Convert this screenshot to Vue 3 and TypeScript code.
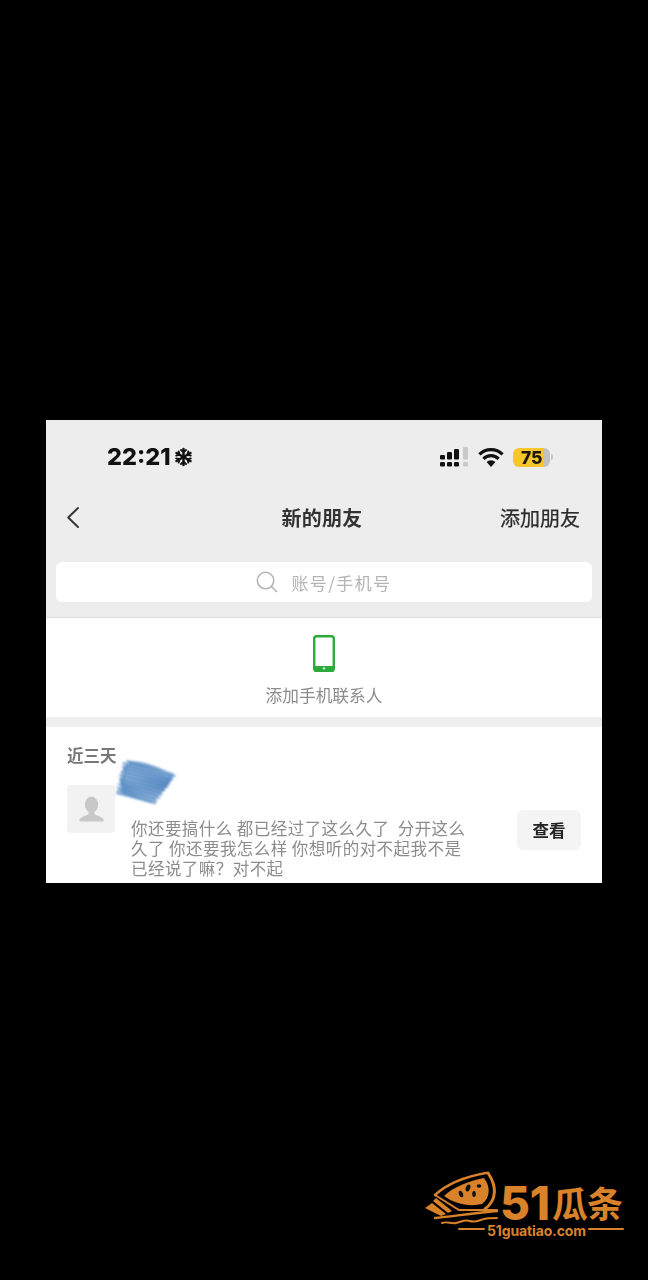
<script setup lang="ts">
// message text, one entry per line as in the screenshot
const msgLines: string[] = [
  '你还要搞什么 都已经过了这么久了  分开这么',
  '久了 你还要我怎么样 你想听的对不起我不是',
  '已经说了嘛？对不起',
]

// signal bars, each one split in an upper and a lower block
const signal = [
  { x: 0, y: 8, h: 4.6, gray: false },
  { x: 7, y: 5, h: 7.6, gray: false },
  { x: 14, y: 2, h: 10.6, gray: false },
  { x: 23, y: 0, h: 12.6, gray: true },
  { x: 0, y: 15, h: 4.6, gray: false },
  { x: 7, y: 15, h: 4.6, gray: false },
  { x: 14, y: 15, h: 4.6, gray: false },
  { x: 23, y: 15, h: 4.6, gray: true },
]

const flakeArms = [0, 60, 120, 180, 240, 300]

// pen scribble over the name: slanted strokes on a blue patch
const scribble = Array.from({ length: 30 }, (_, i) => {
  const t = i / 29
  const wob = Math.sin(i * 2.3) * 3
  const x1 = 12 - 8 * t + wob
  const y1 = 2 + 32 * t
  const x2 = 58 - 20 * t - wob
  const y2 = 15 + 29 * t
  return {
    d: `M${x1.toFixed(1)} ${y1.toFixed(1)}L${x2.toFixed(1)} ${y2.toFixed(1)}`,
    color: i % 3 === 0 ? '#8fb4da' : i % 3 === 1 ? '#4f84bf' : '#6a9ace',
  }
})
</script>

<template>
  <div class="page">
    <div class="shot">
      <div class="head-area">
        <div class="status">
          <div class="time-wrap">
            <span class="time">22:21</span>
            <svg width="19" height="20" viewBox="0 0 20 20" fill="none" stroke="#111" stroke-linecap="round" stroke-linejoin="round">
              <g v-for="a in flakeArms" :key="a" :transform="`rotate(${a} 10 10)`">
                <path d="M10 10V1.5" stroke-width="2.6" />
                <path d="M7.4 2.6 10 5.2l2.6-2.6" stroke-width="2" />
              </g>
            </svg>
          </div>
          <div class="sys">
            <svg width="29" height="20" viewBox="0 0 29 20">
              <rect v-for="(s, i) in signal" :key="i" :x="s.x" :y="s.y" width="5" :height="s.h" rx="1.3" :fill="s.gray ? '#c8c8c8' : '#111'" />
            </svg>
            <svg class="wifi" width="26" height="19" viewBox="0 0 26 19">
              <path d="M13 19 8.6 14a6.2 6.2 0 0 1 8.8 0Z" fill="#111" />
              <path d="M5.4 10.8a10.8 10.8 0 0 1 15.2 0" fill="none" stroke="#111" stroke-width="3.2" />
              <path d="M1.4 6.4a16.6 16.6 0 0 1 23.2 0" fill="none" stroke="#111" stroke-width="3.2" />
            </svg>
            <div class="battery">
              <div class="batt-body"><span class="batt-num">75</span></div>
              <div class="batt-tip"></div>
            </div>
          </div>
        </div>
        <div class="nav">
          <svg class="back" width="12" height="21" viewBox="0 0 12 21" fill="none" stroke="#333" stroke-width="1.9" stroke-linecap="round" stroke-linejoin="round">
            <path d="M11 1 1.2 10.5 11 20" />
          </svg>
          <span class="title">新的朋友</span>
          <span class="add">添加朋友</span>
        </div>
        <div class="search">
          <svg width="22" height="22" viewBox="0 0 23 23" fill="none" stroke="#b4b4b4" stroke-width="1.6" stroke-linecap="round">
            <circle cx="10" cy="10" r="8.6" />
            <path d="m16.4 16.4 5 5" />
          </svg>
          <span>账号/手机号</span>
        </div>
      </div>

      <div class="contact">
        <svg width="22" height="37" viewBox="0 0 22 37">
          <rect x="1.2" y="1.2" width="19.6" height="34.6" rx="2.4" fill="#fff" stroke="#2bab3a" stroke-width="2.4" />
          <rect x="1.2" y="31" width="19.6" height="4.8" fill="#2bab3a" />
          <rect x="9.8" y="32.4" width="2.4" height="2" fill="#cdeccf" />
        </svg>
        <span class="contact-label">添加手机联系人</span>
      </div>

      <div class="list">
        <div class="list-title">近三天</div>
        <div class="req">
          <div class="avatar">
            <svg width="27" height="27" viewBox="0 0 27 27" fill="#c8c8c8">
              <ellipse cx="13.5" cy="8.6" rx="6.6" ry="8" />
              <path d="M10.6 15.5v2.4c-2.8 1.5-7.4 3-9 5.2-.6 1.2-.2 2.4 1 2.4h21.8c1.2 0 1.6-1.2 1-2.4-1.6-2.2-6.2-3.7-9-5.2v-2.4Z" />
            </svg>
          </div>
          <div class="msg">
            <div v-for="line in msgLines" :key="line" class="msg-line">{{ line }}</div>
          </div>
          <div class="btn">查看</div>
        </div>
        <svg class="scribble" width="64" height="50" viewBox="0 0 64 50" fill="none" stroke-width="2" stroke-linecap="round">
          <path d="M15 2C25 2 42 7 53 13 60 17 58 21 52 27 46 33 42 42 35 43 30 44 12 34 6 29 4 25 9 12 15 2Z" fill="#5a8dc4" />
          <path v-for="(s, i) in scribble" :key="i" :d="s.d" :stroke="s.color" />
        </svg>
      </div>
    </div>

    <svg class="logo" width="202" height="70" viewBox="0 0 202 70">
      <g fill="#d98229">
        <!-- melon slice -->
        <path d="M20 26C29 17 45 11 60 8c7 9 6 20-2 26-13 3-27 0-38-8Z" />
        <!-- tail stripes -->
        <path d="M1 38 8 33l14 11-5 2ZM9 31l3-3 16 13-4 2Z" />
      </g>
      <g fill="none" stroke="#d98229" stroke-linecap="round">
        <path d="M11 25C24 13 45 6 62 3" stroke-width="2.6" />
        <path d="M64 3c9 13 9 27-3 36" stroke-width="3" />
        <path d="M11 25 35 40H73" stroke-width="2" />
        <path d="M11 48C30 46 50 43 73 41" stroke-width="2.4" />
        <path d="M18 53c5-2 9 1 14 0s9-4 14-2 10-1 14-2 8-1 13-1" stroke-width="2" />
        <path d="M35 59H60M165 59H199" stroke-width="2" />
      </g>
      <g fill="#111">
        <ellipse cx="37" cy="24" rx="2" ry="3.4" transform="rotate(-20 37 24)" />
        <ellipse cx="44" cy="18" rx="2.2" ry="3.6" transform="rotate(20 44 18)" />
        <ellipse cx="50" cy="24" rx="1.8" ry="3" />
        <ellipse cx="55" cy="16" rx="2.4" ry="1.8" />
      </g>
      <text x="76" y="50" font-family="Inter, sans-serif" font-size="46" font-weight="800" fill="#d98229" textLength="50">51</text>
      <text x="128" y="48" font-family="Noto Sans CJK SC, sans-serif" font-size="36" font-weight="700" fill="#d98229" textLength="71">瓜条</text>
      <text x="63" y="66" font-family="Inter, sans-serif" font-size="14" font-weight="700" fill="#d98229" textLength="99">51guatiao.com</text>
    </svg>
  </div>
</template>

<style scoped>
.page {
  width: 648px;
  height: 1280px;
  background: #000;
  display: flex;
  flex-direction: column;
  padding: 420px 0 0 46px;
  box-sizing: border-box;
  overflow: hidden;
  font-family: "Noto Sans CJK SC", "Liberation Sans", sans-serif;
}

.shot {
  width: 556px;
  height: 463px;
  background: #fff;
  overflow: hidden;
  flex-shrink: 0;
  filter: blur(0.5px);
}

.head-area {
  background: #ededed;
  height: 198px;
  border-bottom: 1px solid #dcdcdc;
  box-sizing: border-box;
  padding-top: 27px;
}

.status {
  display: flex;
  justify-content: space-between;
  align-items: center;
  height: 20px;
  padding: 0 49px 0 61px;
}

.time-wrap {
  display: flex;
  align-items: center;
  gap: 3px;
}

.time {
  font-family: "Inter", "Liberation Sans", sans-serif;
  font-size: 23.5px;
  font-weight: 800;
  color: #111;
  line-height: 20px;
}

.sys {
  display: flex;
  align-items: center;
}

.wifi {
  margin: 0 9px;
}

.battery {
  display: flex;
  align-items: center;
  gap: 1px;
}

.batt-body {
  width: 37px;
  height: 19px;
  border-radius: 6px;
  background: linear-gradient(90deg, #f8c52c 0 30px, #c2c2c2 30px);
  display: flex;
  align-items: center;
  padding-left: 8px;
  box-sizing: border-box;
}

.batt-num {
  font-family: "Inter", "Liberation Sans", sans-serif;
  font-size: 17.5px;
  font-weight: 800;
  color: #1c1606;
  line-height: 19px;
}

.batt-tip {
  width: 2px;
  height: 6px;
  border-radius: 0 2px 2px 0;
  background: #c8c8c8;
}

.nav {
  display: grid;
  grid-template-columns: 1fr auto 1fr;
  align-items: center;
  margin-top: 36px;
  height: 22px;
  padding: 0 22px 0 21px;
}

.title {
  font-size: 20px;
  font-weight: 700;
  color: #333;
  letter-spacing: 0.3px;
  padding-right: 3px;
}

.add {
  font-size: 20px;
  color: #2b2b2b;
  -webkit-text-stroke: 0.25px #2b2b2b;
  justify-self: end;
}

.search {
  margin: 37px 10px 0;
  height: 40px;
  background: #fff;
  border-radius: 6px;
  display: flex;
  align-items: center;
  justify-content: center;
  gap: 13px;
  font-size: 17px;
  letter-spacing: 1.4px;
  color: #b4b4b4;
}

.contact {
  height: 99px;
  box-sizing: border-box;
  padding-top: 17px;
  display: flex;
  flex-direction: column;
  align-items: center;
  gap: 11px;
}

.contact-label {
  font-size: 16.7px;
  line-height: 24px;
  color: #8c8c8c;
}

.list {
  position: relative;
  border-top: 10px solid #eeeeee;
  padding: 16px 21px 0;
}

.list-title {
  font-size: 16.5px;
  line-height: 24px;
  font-weight: 700;
  color: #787878;
}

.req {
  display: flex;
  align-items: center;
  margin-top: 18px;
}

.avatar {
  width: 48px;
  height: 48px;
  background: #f2f2f2;
  border-radius: 4px;
  display: flex;
  align-items: center;
  justify-content: center;
  align-self: flex-start;
  flex-shrink: 0;
}

.msg {
  margin-left: 16px;
  padding-top: 33px;
  flex: 1;
  font-size: 16.5px;
  letter-spacing: 0.45px;
  line-height: 20px;
  color: #8c8c8c;
  white-space: pre;
}

.btn {
  width: 64px;
  height: 40px;
  background: #f4f4f4;
  border-radius: 6px;
  display: flex;
  align-items: center;
  justify-content: center;
  font-size: 16.5px;
  font-weight: 700;
  color: #222;
  margin-bottom: 3px;
  flex-shrink: 0;
}

.scribble {
  position: absolute;
  left: 69px;
  top: 32px;
  filter: blur(1.2px);
}

.logo {
  margin: 287px 0 0 378px;
  flex-shrink: 0;
}
</style>
